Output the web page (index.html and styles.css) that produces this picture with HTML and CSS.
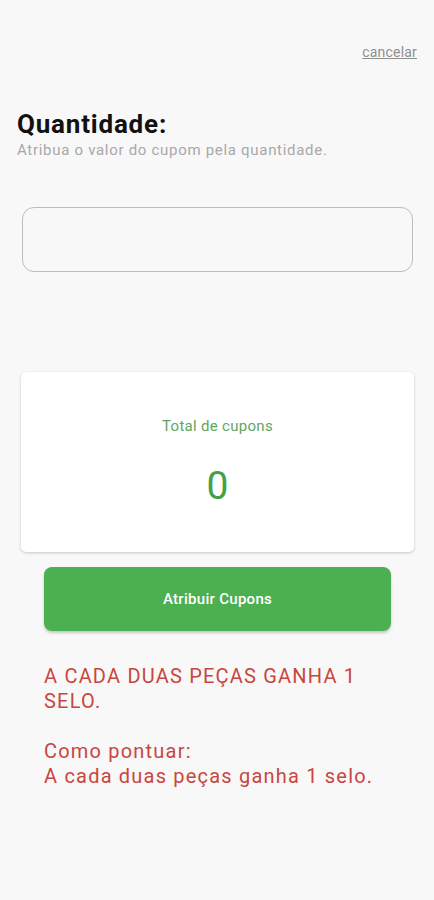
FILE: index.html
```html
<!DOCTYPE html>
<html lang="pt-BR">
<head>
    <meta charset="UTF-8">
    <meta name="viewport" content="width=device-width, initial-scale=1.0">
    <title>Quantidade</title>
    <link rel="stylesheet" href="styles.css">
</head>
<body>
    <div class="page">
        <div class="top-bar">
            <a href="#" class="cancel">cancelar</a>
        </div>

        <h1 class="title">Quantidade:</h1>
        <p class="subtitle">Atribua o valor do cupom pela quantidade.</p>

        <input type="text" class="qty-input">

        <div class="card">
            <div class="card-label">Total de cupons</div>
            <div class="card-value">0</div>
        </div>

        <button class="btn-assign">Atribuir Cupons</button>

        <div class="rules">
            <p>A CADA DUAS PEÇAS GANHA 1 SELO.</p>
            <p>Como pontuar:<br>A cada duas peças ganha 1 selo.</p>
        </div>
    </div>
</body>
</html>
```

FILE: styles.css
```css
/* base */
body {
    margin: 0;
    padding: 0;
    background-color: #f8f8f8;
    font-family: Roboto, "Liberation Sans", sans-serif;
}

.page {
    padding: 0 17px;
}

.top-bar {
    display: flex;
    justify-content: flex-end;
    padding-top: 44px;
}

.cancel {
    color: #8f8f8f;
    font-size: 14px;
    letter-spacing: 0.2px;
    text-decoration: underline;
}

.title {
    margin: 49px 0 0;
    font-size: 26px;
    font-weight: 700;
    letter-spacing: 0.8px;
    color: #111;
}

.subtitle {
    margin: 2px 0 0;
    font-size: 15px;
    letter-spacing: 0.7px;
    color: #a8a8a8;
}

.qty-input {
    display: block;
    box-sizing: border-box;
    width: 391px;
    height: 65px;
    margin: 48px 0 0 5px;
    border: 1.5px solid #bdbdbd;
    border-radius: 12px;
    background-color: #f8f8f8;
}

.card {
    box-sizing: border-box;
    width: 393px;
    height: 180px;
    margin: 100px 0 0 4px;
    background-color: #fff;
    border-radius: 5px;
    box-shadow: 0 1px 3px rgba(0, 0, 0, 0.2);
    text-align: center;
    padding-top: 45px;
}

.card-label {
    font-size: 15px;
    letter-spacing: 0.3px;
    color: #5fa562;
}

.card-value {
    margin-top: 28px;
    font-size: 39px;
    color: #43a047;
}

.btn-assign {
    display: block;
    width: 347px;
    height: 64px;
    margin: 15px 0 0 27px;
    background-color: #4caf50;
    color: #fff;
    border: none;
    border-radius: 8px;
    font-family: inherit;
    font-size: 15px;
    font-weight: 500;
    letter-spacing: 0.3px;
    box-shadow: 0 2px 3px rgba(0, 0, 0, 0.2);
}

.rules {
    width: 350px;
    margin: 33px 0 0 27px;
    color: #c94640;
    font-size: 20px;
    letter-spacing: 1.2px;
    line-height: 25px;
}

.rules p {
    margin: 0 0 25px;
}
```
